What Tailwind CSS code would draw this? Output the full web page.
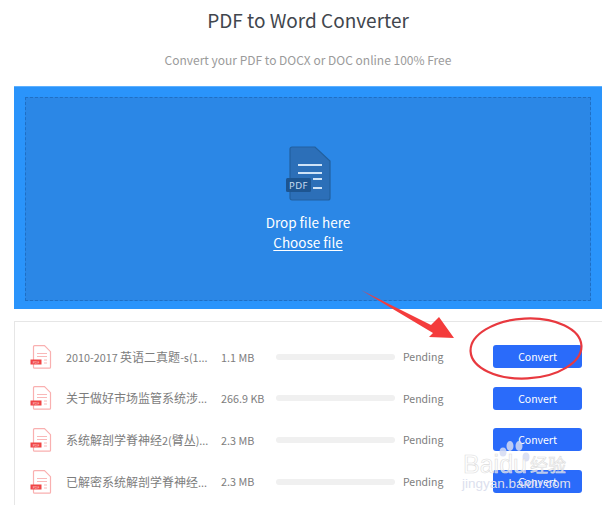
<!DOCTYPE html>
<html lang="en">
<head>
    <meta charset="UTF-8">
    <title>PDF to Word Converter</title>
    <script src="https://cdn.jsdelivr.net/npm/@tailwindcss/browser@4"></script>
</head>
<body class="relative h-[505px] w-[602px] overflow-hidden bg-white font-['Noto_Sans_CJK_SC','Noto_Sans',sans-serif]">
    <main class="ml-[14px] w-[588px]">
        <h1 class="flex h-[40px] items-center justify-center text-[19px] font-normal text-[#41464d]">PDF to Word Converter</h1>
        <p class="flex h-[40px] items-center justify-center text-[12px] text-[#9b9b9b]">Convert your PDF to DOCX or DOC online 100% Free</p>

        <section class="mt-[6px] h-[223px] border-t border-[#5cb0ff] bg-[#2a94fb] px-[11px] pt-[10px] pb-[8px]">
            <div class="flex h-full flex-col items-center border border-dashed border-[#1f6fc4] bg-[#2b87e6] pt-[48px] text-white">
                <svg width="46" height="56" viewBox="0 0 46 56">
                    <path d="M7 1h23l15 14v37a2 2 0 0 1-2 2H7a2 2 0 0 1-2-2V3a2 2 0 0 1 2-2z" fill="#2c6fb8" stroke="#22609f" stroke-width="1.2"/>
                    <path d="M13 19h24M13 27h24M28 33h9M28 42h9" stroke="#cfe3f7" stroke-width="2" fill="none"/>
                    <rect x="1" y="32" width="25" height="14" rx="1.5" fill="#1d5591"/>
                    <text x="13.5" y="43" text-anchor="middle" font-size="9.500" fill="#c7dcf2" font-family="Noto Sans" letter-spacing="0.5">PDF</text>
                </svg>
                <p class="mt-[10px] text-[13.500px] leading-[20px]">Drop file here</p>
                <a class="text-[13.500px] leading-[20px] underline underline-offset-2">Choose file</a>
            </div>
        </section>

        <section class="mt-[12px] h-[200px] border-t border-l border-[#e6e6e6] pt-[14px]">
            <div class="flex h-[41.6px] items-center text-[10.800px] text-[#7d7d7d]">
                <svg width="22" height="24" viewBox="0 0 22 24" class="ml-[15px] shrink-0"><path d="M4.5.7h10l6 6v15.5a1 1 0 0 1-1 1h-15a1 1 0 0 1-1-1V1.700a1 1 0 0 1 1-1z" fill="#fff" stroke="#f9b0b0" stroke-width="1.200"/><path d="M7 8.500h10M7 11.500h10M14 15h3M14 18h3" stroke="#f9b8b8"/><rect x="0.500" y="14.500" width="11" height="5" fill="#f04545"/><text x="6" y="18.500" text-anchor="middle" font-size="3.500" fill="#ffd5d5" font-family="Noto Sans">PDF</text></svg>
                <span class="ml-[14px] w-[155px] shrink-0 truncate">2010-2017 <span class="text-[12px]">英语二真题</span>-s(1...</span>
                <span class="w-[55px] shrink-0">1.1 MB</span>
                <span class="h-[6px] w-[119px] shrink-0 rounded-full bg-[#f0f0f0]"></span>
                <span class="ml-[8px] w-[90px] shrink-0 text-[10.500px]">Pending</span>
                <button class="h-[23px] w-[89px] rounded-[3px] bg-[#2a6bfa] text-[10.500px] text-white">Convert</button>
            </div>
            <div class="flex h-[41.6px] items-center text-[10.800px] text-[#7d7d7d]">
                <svg width="22" height="24" viewBox="0 0 22 24" class="ml-[15px] shrink-0"><path d="M4.5.7h10l6 6v15.5a1 1 0 0 1-1 1h-15a1 1 0 0 1-1-1V1.700a1 1 0 0 1 1-1z" fill="#fff" stroke="#f9b0b0" stroke-width="1.200"/><path d="M7 8.500h10M7 11.500h10M14 15h3M14 18h3" stroke="#f9b8b8"/><rect x="0.500" y="14.500" width="11" height="5" fill="#f04545"/><text x="6" y="18.500" text-anchor="middle" font-size="3.500" fill="#ffd5d5" font-family="Noto Sans">PDF</text></svg>
                <span class="ml-[14px] w-[155px] shrink-0 truncate"><span class="text-[12px]">关于做好市场监管系统涉</span>...</span>
                <span class="w-[55px] shrink-0">266.9 KB</span>
                <span class="h-[6px] w-[119px] shrink-0 rounded-full bg-[#f0f0f0]"></span>
                <span class="ml-[8px] w-[90px] shrink-0 text-[10.500px]">Pending</span>
                <button class="h-[23px] w-[89px] rounded-[3px] bg-[#2a6bfa] text-[10.500px] text-white">Convert</button>
            </div>
            <div class="flex h-[41.6px] items-center text-[10.800px] text-[#7d7d7d]">
                <svg width="22" height="24" viewBox="0 0 22 24" class="ml-[15px] shrink-0"><path d="M4.5.7h10l6 6v15.5a1 1 0 0 1-1 1h-15a1 1 0 0 1-1-1V1.700a1 1 0 0 1 1-1z" fill="#fff" stroke="#f9b0b0" stroke-width="1.200"/><path d="M7 8.500h10M7 11.500h10M14 15h3M14 18h3" stroke="#f9b8b8"/><rect x="0.500" y="14.500" width="11" height="5" fill="#f04545"/><text x="6" y="18.500" text-anchor="middle" font-size="3.500" fill="#ffd5d5" font-family="Noto Sans">PDF</text></svg>
                <span class="ml-[14px] w-[155px] shrink-0 truncate"><span class="text-[12px]">系统解剖学脊神经</span>2(<span class="text-[12px]">臂丛</span>)...</span>
                <span class="w-[55px] shrink-0">2.3 MB</span>
                <span class="h-[6px] w-[119px] shrink-0 rounded-full bg-[#f0f0f0]"></span>
                <span class="ml-[8px] w-[90px] shrink-0 text-[10.500px]">Pending</span>
                <button class="h-[23px] w-[89px] rounded-[3px] bg-[#2a6bfa] text-[10.500px] text-white">Convert</button>
            </div>
            <div class="flex h-[41.6px] items-center text-[10.800px] text-[#7d7d7d]">
                <svg width="22" height="24" viewBox="0 0 22 24" class="ml-[15px] shrink-0"><path d="M4.5.7h10l6 6v15.5a1 1 0 0 1-1 1h-15a1 1 0 0 1-1-1V1.700a1 1 0 0 1 1-1z" fill="#fff" stroke="#f9b0b0" stroke-width="1.200"/><path d="M7 8.500h10M7 11.500h10M14 15h3M14 18h3" stroke="#f9b8b8"/><rect x="0.500" y="14.500" width="11" height="5" fill="#f04545"/><text x="6" y="18.500" text-anchor="middle" font-size="3.500" fill="#ffd5d5" font-family="Noto Sans">PDF</text></svg>
                <span class="ml-[14px] w-[155px] shrink-0 truncate"><span class="text-[12px]">已解密系统解剖学脊神经</span>...</span>
                <span class="w-[55px] shrink-0">2.3 MB</span>
                <span class="h-[6px] w-[119px] shrink-0 rounded-full bg-[#f0f0f0]"></span>
                <span class="ml-[8px] w-[90px] shrink-0 text-[10.500px]">Pending</span>
                <button class="h-[23px] w-[89px] rounded-[3px] bg-[#2a6bfa] text-[10.500px] text-white">Convert</button>
            </div>
        </section>
    </main>

    <!-- red annotation over the list -->
    <svg class="absolute top-0 left-0" width="602" height="505" viewBox="0 0 602 505" fill="none">
        <path d="M361 290L431 325L439 317L454 338L429 337L433 333Z" fill="#f43c3c"/>
        <ellipse cx="526" cy="348.500" rx="55.500" ry="30" stroke="#e8393f" stroke-width="2.200" transform="rotate(-3 526 348.500)"/>
    </svg>

    <!-- watermark -->
    <svg class="absolute top-[440px] left-[496px]" width="36" height="24" viewBox="0 0 36 24" fill="#d5dbf2" fill-opacity="0.85">
        <ellipse cx="7" cy="12" rx="3.500" ry="4.500"/><ellipse cx="14" cy="6" rx="3.500" ry="5"/><ellipse cx="23" cy="6" rx="3.500" ry="5"/><ellipse cx="30" cy="17" rx="3.500" ry="4.500"/>
    </svg>
    <div class="absolute top-[449px] left-[463px] flex items-center font-['Liberation_Sans',sans-serif] text-[25px] leading-[30px] text-white/60 [-webkit-text-stroke:0.6px_#dcdcdc]">
        <span>Baidu</span><span class="ml-[3px] font-['Noto_Sans_CJK_SC',sans-serif] text-[18px] leading-[30px]">经验</span>
    </div>
    <div class="absolute top-[474px] left-[462px] font-['Liberation_Sans',sans-serif] text-[13.500px] leading-[20px] text-[#dcdfee]">jingyan.baidu.com</div>
</body>
</html>
